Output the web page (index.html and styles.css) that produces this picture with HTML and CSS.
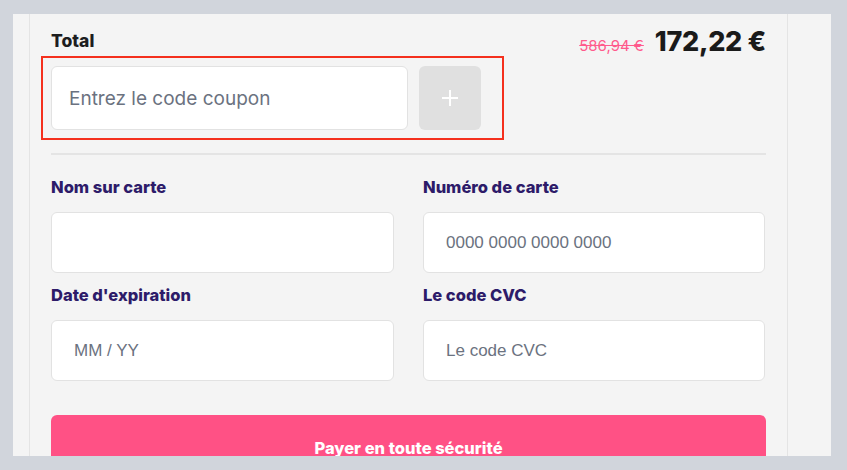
FILE: index.html
```html
<!DOCTYPE html>
<html lang="fr">
<head>
<meta charset="utf-8">
<title>Paiement</title>
<link rel="stylesheet" href="styles.css">
</head>
<body>
<div class="frame">
  <div class="sheet">
    <div class="total-row">
      <span class="total-label">Total</span>
      <span class="prices">
        <span class="old-price">586,94 €</span>
        <span class="new-price">172,22 €</span>
      </span>
    </div>
    <div class="coupon-highlight">
      <input class="coupon-input" type="text" placeholder="Entrez le code coupon">
      <button class="coupon-btn" type="button" aria-label="Ajouter">
        <svg width="18" height="18" viewBox="0 0 18 18"><path d="M9 1v16M1 9h16" stroke="#fff" stroke-width="2" fill="none"/></svg>
      </button>
    </div>
    <hr class="divider">
    <div class="form-grid">
      <label class="field">
        <span class="field-label">Nom sur carte</span>
        <input class="field-input" type="text">
      </label>
      <label class="field">
        <span class="field-label">Numéro de carte</span>
        <input class="field-input" type="text" placeholder="0000 0000 0000 0000">
      </label>
      <label class="field">
        <span class="field-label">Date d'expiration</span>
        <input class="field-input" type="text" placeholder="MM / YY">
      </label>
      <label class="field">
        <span class="field-label">Le code CVC</span>
        <input class="field-input" type="text" placeholder="Le code CVC">
      </label>
    </div>
    <button class="pay-btn" type="button">Payer en toute sécurité</button>
  </div>
</div>
</body>
</html>
```

FILE: styles.css
```css
* { box-sizing: border-box; }
html, body { margin: 0; padding: 0; }
body {
  background: #d1d5dc;
  width: 847px;
  height: 470px;
  overflow: hidden;
  font-family: "Inter", "Noto Sans", sans-serif;
}
.frame {
  margin: 14px 0 0 13px;
  width: 818px;
  height: 442px;
  background: #f4f4f4;
  overflow: hidden;
  padding-left: 16px;
}
.sheet {
  width: 759px;
  height: 100%;
  border-left: 1px solid #e4e4e4;
  border-right: 1px solid #e4e4e4;
  padding: 12px 21px 0 21px;
  display: flex;
  flex-direction: column;
}
.sheet > * { flex-shrink: 0; }
.total-row {
  display: flex;
  justify-content: space-between;
  align-items: flex-start;
  height: 30px;
}
.total-label {
  font-size: 17.5px;
  line-height: 22px;
  margin-top: 4px;
  font-weight: 800;
  color: #1d1d1f;
}
.prices {
  display: flex;
  align-items: baseline;
  gap: 11px;
}
.old-price {
  font-size: 15px;
  color: #ff5a8c;
  text-decoration: line-through;
}
.new-price {
  font-size: 27px;
  line-height: 32px;
  font-weight: 800;
  color: #1a1a1a;
  letter-spacing: -0.3px;
}
.coupon-highlight {
  align-self: flex-start;
  margin-left: -10px;
  border: 2px solid #f4301d;
  padding: 8px 21px 8px 8px;
  display: flex;
  gap: 11px;
}
.coupon-input {
  width: 357px;
  height: 64px;
  border: 1px solid #e2e2e2;
  border-radius: 6px;
  background: #fff;
  padding: 0 17px;
  font-family: "Inter", sans-serif;
  font-size: 19px;
  color: #333;
  outline: none;
}
.coupon-input::placeholder { color: #6b7280; }
.coupon-btn {
  width: 62px;
  height: 64px;
  border: none;
  border-radius: 6px;
  background: #e0e0e0;
  display: flex;
  align-items: center;
  justify-content: center;
  padding: 0;
}
.divider {
  margin: 13px 0 0 0;
  border: none;
  height: 2px;
  background: #e4e4e4;
}
.form-grid {
  margin-top: 22px;
  display: grid;
  grid-template-columns: 343px 342px;
  column-gap: 29px;
  row-gap: 12px;
}
.field {
  display: flex;
  flex-direction: column;
  gap: 15px;
}
.field-label {
  font-size: 16.5px;
  line-height: 20px;
  font-weight: 800;
  color: #2d1b69;
}
.field-input {
  height: 61px;
  border: 1px solid #e2e2e2;
  border-radius: 6px;
  background: #fff;
  padding: 0 22px;
  font-family: "Liberation Sans", Arial, sans-serif;
  font-size: 17px;
  color: #333;
  outline: none;
}
.field-input::placeholder { color: #6b7280; }
.pay-btn {
  margin-top: 34px;
  height: 62px;
  border: none;
  border-radius: 6px;
  background: #ff5185;
  color: #fff;
  font-family: "Inter", sans-serif;
  font-size: 16.5px;
  font-weight: 800;
  padding: 4px 0 0 0;
}
```
